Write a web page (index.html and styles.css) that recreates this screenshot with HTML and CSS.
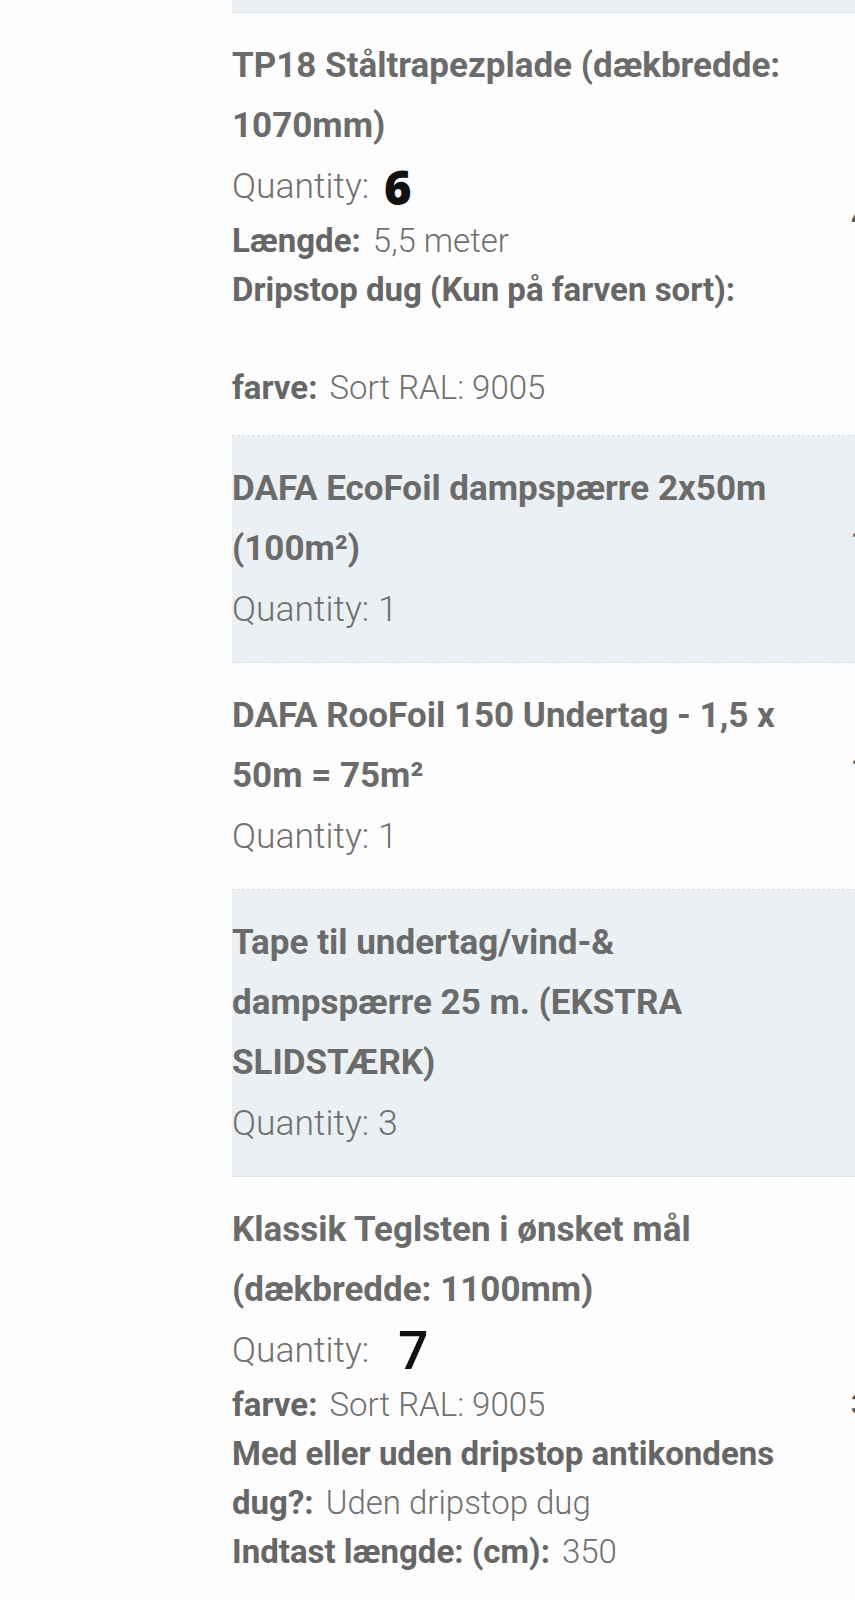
FILE: index.html
```html
<!DOCTYPE html>
<html lang="da">
<head>
    <meta charset="UTF-8">
    <meta name="viewport" content="width=device-width, initial-scale=1.0">
    <title>Kurv</title>
    <link rel="stylesheet" href="styles.css">
</head>
<body>
    <div class="cart">
        <!-- previous line, only its bottom edge is on screen -->
        <div class="item item-alt item-cut"></div>

        <div class="item">
            <div class="item-info">
                <p class="item-name">TP18 Ståltrapezplade (dækbredde: 1070mm)</p>
                <p class="item-qty">Quantity: <span class="qty-mark qty-six">6</span></p>
                <p class="item-meta"><b>Længde:</b> 5,5 meter</p>
                <p class="item-meta"><b>Dripstop dug (Kun på farven sort):</b></p>
                <p class="item-meta item-blank"></p>
                <p class="item-meta"><b>farve:</b> Sort RAL: 9005</p>
            </div>
            <div class="item-price">4.290,00 kr.</div>
        </div>

        <div class="item item-alt">
            <div class="item-info">
                <p class="item-name">DAFA EcoFoil dampspærre 2x50m (100m²)</p>
                <p class="item-qty">Quantity: 1</p>
            </div>
            <div class="item-price">1.095,00 kr.</div>
        </div>

        <div class="item">
            <div class="item-info">
                <p class="item-name">DAFA RooFoil 150 Undertag - 1,5 x 50m = 75m²</p>
                <p class="item-qty">Quantity: 1</p>
            </div>
            <div class="item-price">1.195,00 kr.</div>
        </div>

        <div class="item item-alt">
            <div class="item-info">
                <p class="item-name">Tape til undertag/vind-&amp; dampspærre 25 m. (EKSTRA SLIDSTÆRK)</p>
                <p class="item-qty">Quantity: 3</p>
            </div>
            <div class="item-price item-price-hidden">297,00 kr.</div>
        </div>

        <div class="item">
            <div class="item-info">
                <p class="item-name">Klassik Teglsten i ønsket mål (dækbredde: 1100mm)</p>
                <p class="item-qty">Quantity: <span class="qty-mark qty-seven">7</span></p>
                <p class="item-meta"><b>farve:</b> Sort RAL: 9005</p>
                <p class="item-meta"><b>Med eller uden dripstop antikondens dug?:</b> Uden dripstop dug</p>
                <p class="item-meta"><b>Indtast længde: (cm):</b> 350</p>
                <p class="item-meta item-blank"></p>
            </div>
            <div class="item-price">3.570,00 kr.</div>
        </div>
    </div>
</body>
</html>
```

FILE: styles.css
```css
html, body {
    overflow-x: hidden;
}
body {
    margin: 0;
    background-color: #fdfdfd;
    font-family: "Roboto", "Liberation Sans", sans-serif;
    color: #6b6b6b;
}
.cart {
    margin-left: 232px;
}
.item {
    display: flex;
    align-items: center;
    padding: 23px 0;
    border-bottom: 1px dashed #d9dee2;
}
.item-alt {
    background-color: #ebf0f4;
}
.item-cut {
    height: 12px;
    padding: 0;
}
.item-info {
    width: 570px;
    flex-shrink: 0;
}
.item-info p {
    margin: 0;
}
.item-name {
    font-size: 35px;
    font-weight: 700;
    line-height: 60px;
}
.item-qty {
    font-size: 35.5px;
    font-weight: 300;
    line-height: 60px;
    color: #707070;
}
.item-meta {
    font-size: 33px;
    font-weight: 300;
    line-height: 49px;
    color: #707070;
}
.item-blank {
    height: 49px;
}
.item-meta b {
    font-weight: 700;
    color: #666;
    margin-right: 4px;
}
.qty-mark {
    font-family: "Open Sans", "DejaVu Sans", sans-serif;
    color: #111;
    line-height: 0;
}
.qty-six {
    font-size: 47px;
    font-weight: 800;
    margin-left: 6px;
    vertical-align: -7px;
}
.qty-seven {
    font-size: 53px;
    font-weight: 600;
    margin-left: 20px;
    vertical-align: -7px;
}
.item-price {
    margin-left: 49px;
    margin-top: -16px;
    font-size: 28px;
    font-weight: 700;
    color: #555;
    white-space: nowrap;
}
.item-price-hidden {
    padding-left: 10px;
}
```
